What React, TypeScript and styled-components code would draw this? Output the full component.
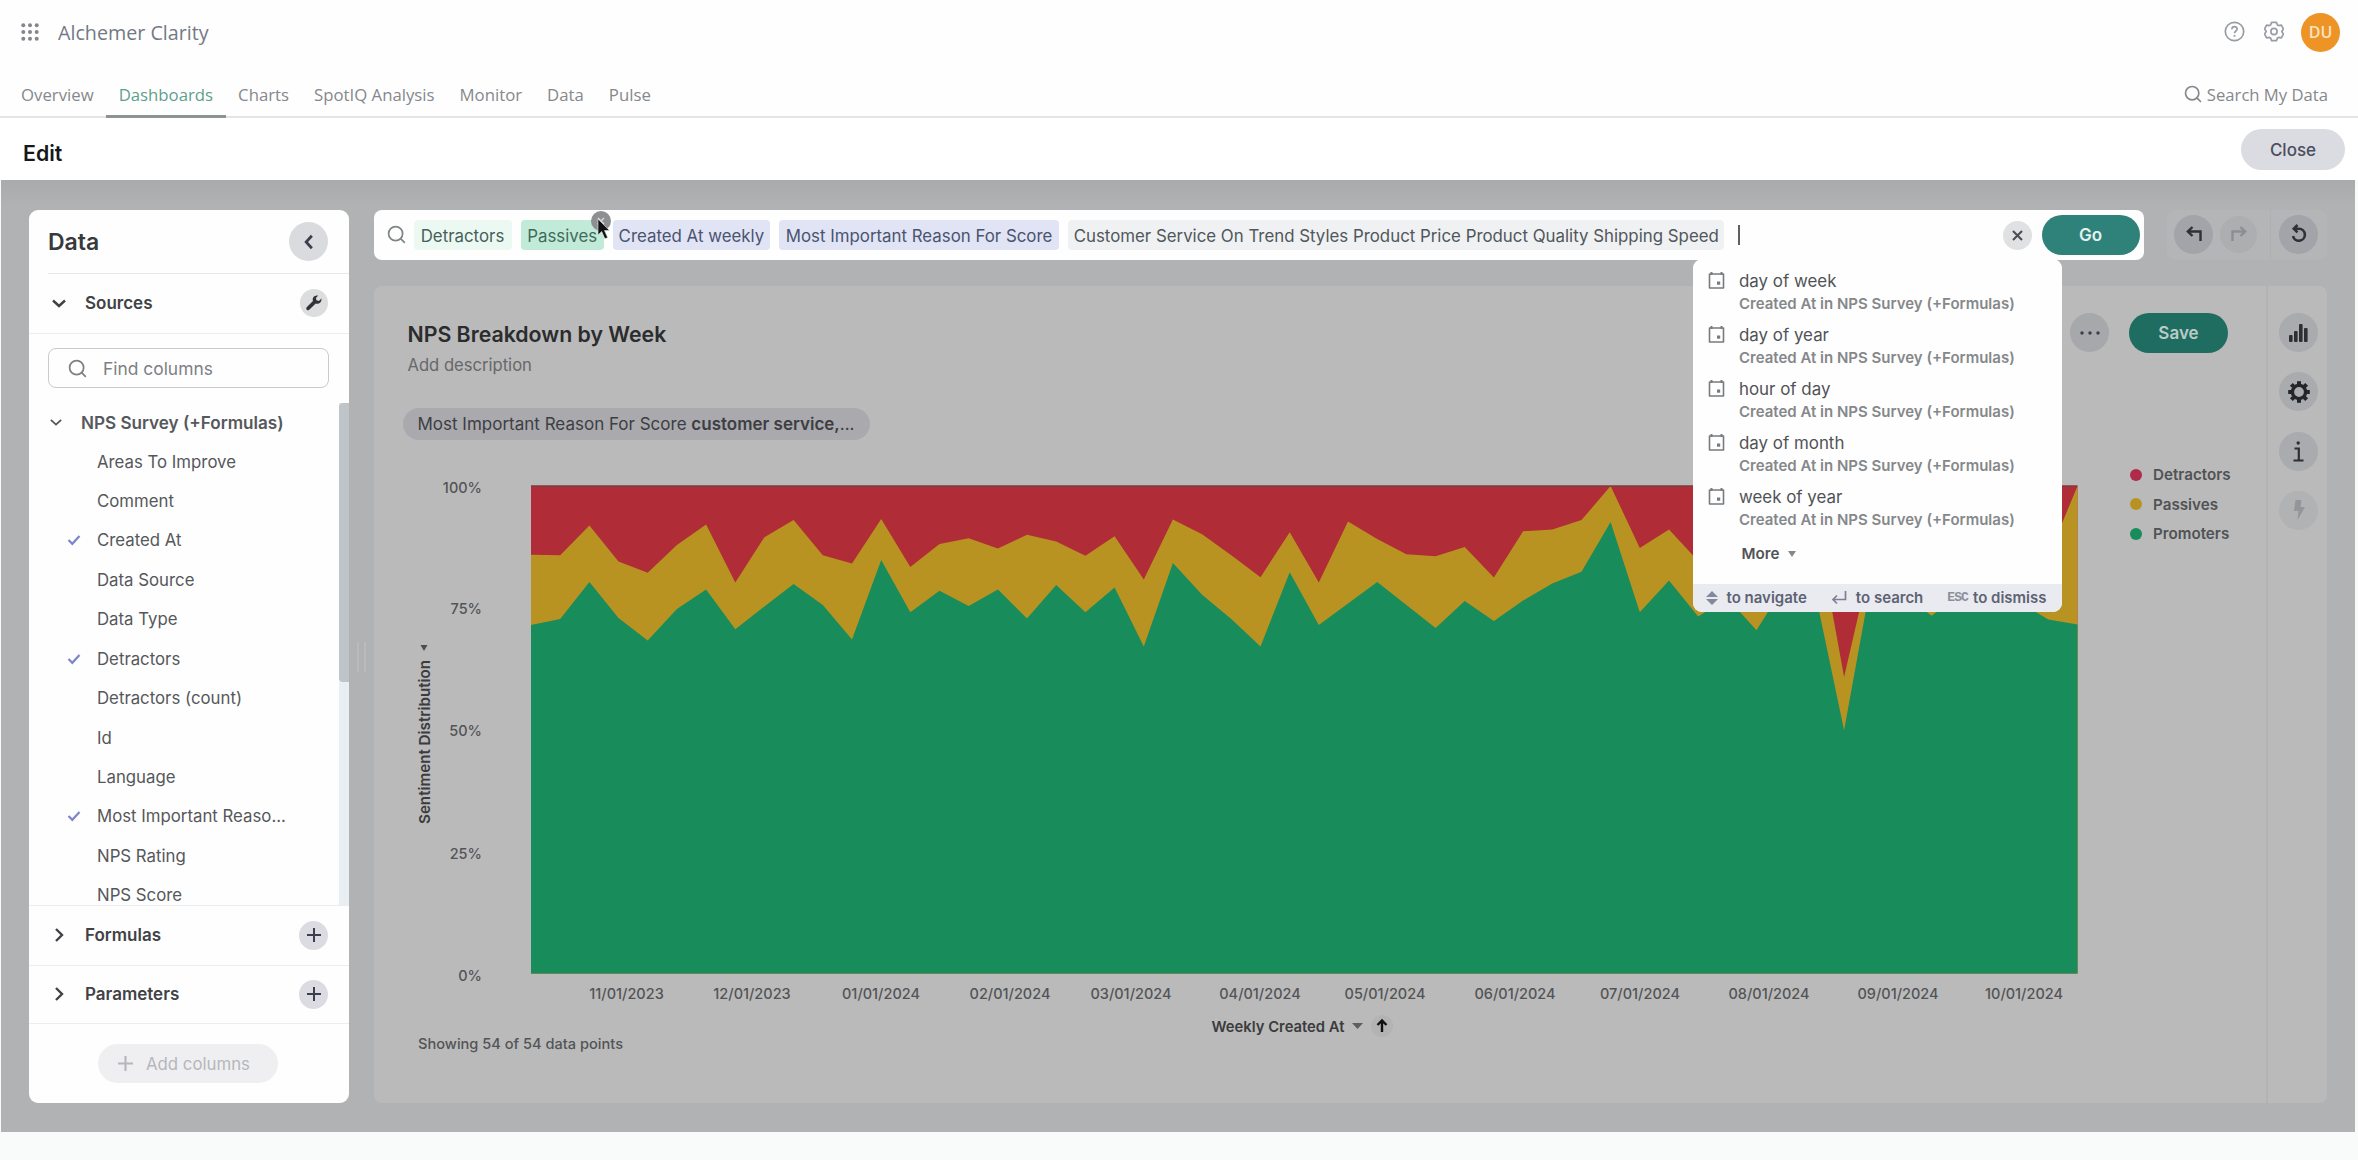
import React from "react";
import styled, { createGlobalStyle } from "styled-components";
import { Search } from "lucide-react";

const Global = createGlobalStyle`
  * { box-sizing: border-box; }
  body { margin: 0; background: #fefefe; font-family: Inter, "Liberation Sans", sans-serif; }
  button { font: inherit; border: 0; padding: 0; cursor: pointer; }
`;

const Page = styled.div`
  width: 2358px;
  height: 1160px;
  display: flex;
  flex-direction: column;
  overflow: hidden;
  background: #f9fafa;
`;

/* ---------- top chrome ---------- */
const Brand = styled.header`
  height: 64px;
  flex: none;
  display: flex;
  align-items: center;
  padding: 0 18px 0 21px;
  background: #fefefe;
`;
const BrandName = styled.span`
  margin-left: 19px;
  flex: 1;
  font: 400 19.7px "Open Sans", sans-serif;
  color: #747985;
`;
const Avatar = styled.div`
  width: 39px;
  height: 39px;
  margin-left: 17px;
  border-radius: 50%;
  background: #ee9426;
  color: #fbe3c2;
  display: flex;
  align-items: center;
  justify-content: center;
  font: 600 16px "Open Sans", sans-serif;
`;
const BrandIcon = styled.span`
  display: flex;
  margin: -2px 0 0 19px;
  color: #989ca4;
`;
const Nav = styled.nav`
  height: 54px;
  flex: none;
  display: flex;
  padding: 0 30px 0 8.5px;
  background: #fefefe;
  border-bottom: 2px solid #e3e4e4;
`;
const Tab = styled.a<{ $active?: boolean }>`
  height: 54px;
  padding: 0 12.5px;
  line-height: 61px;
  font-family: "Open Sans", sans-serif;
  font-size: 16.75px;
  color: ${(p) => (p.$active ? "#5f9e8e" : "#85888c")};
  border-bottom: 3px solid ${(p) => (p.$active ? "#8c9492" : "transparent")};
`;
const NavSearch = styled.div`
  margin-left: auto;
  display: flex;
  align-items: center;
  gap: 4px;
  padding-top: 8px;
  font: 400 16.65px "Open Sans", sans-serif;
  color: #85888c;
`;
const EditBar = styled.div`
  height: 62px;
  flex: none;
  display: flex;
  align-items: center;
  justify-content: space-between;
  padding: 2px 13px 0 23px;
  background: #fff;
`;
const EditTitle = styled.h1`
  margin: 6px 0 0;
  font-size: 21.3px;
  font-weight: 600;
  color: #17181a;
`;
const CloseButton = styled.button`
  width: 104px;
  height: 41px;
  margin-top: -1px;
  border-radius: 21px;
  background: #dbdbe2;
  color: #4b4e60;
  font-size: 17px;
  font-weight: 500;
`;

/* ---------- workspace ---------- */
const Workspace = styled.main`
  height: 952px;
  flex: none;
  margin: 0 3px 0 1px;
  display: flex;
  padding: 30px 28px 29px 28px;
  background: linear-gradient(#a8aaab, #b0b2b3 26px, #b0b2b3);
`;
const Sidebar = styled.aside`
  width: 320px;
  flex: none;
  display: flex;
  flex-direction: column;
  border-radius: 9px;
  background: #fefefe;
  overflow: hidden;
`;
const SideHead = styled.div`
  height: 64px;
  flex: none;
  display: flex;
  align-items: center;
  justify-content: space-between;
  margin-left: 19px;
  padding-right: 21px;
  border-bottom: 1px solid #e6e8ea;
  font-size: 23px;
  font-weight: 600;
  color: #37393d;
`;
const Round = styled.button<{ $size: number; $bg?: string; $fg?: string }>`
  width: ${(p) => p.$size}px;
  height: ${(p) => p.$size}px;
  flex: none;
  display: flex;
  align-items: center;
  justify-content: center;
  border-radius: 50%;
  background: ${(p) => p.$bg ?? "#d9dbdf"};
  color: ${(p) => p.$fg ?? "#3b3e4e"};
`;
const ClearButton = styled(Round)`
  margin-left: auto;
`;
const RedoButton = styled(Round)`
  margin-left: 7px;
`;
const Section = styled.div<{ $height: number }>`
  height: ${(p) => p.$height}px;
  flex: none;
  display: flex;
  align-items: center;
  padding: 0 21px 1px 23px;
  border-bottom: 1px solid #ebedf0;
  color: #3f4246;
  svg { flex: none; }
`;
const SectionName = styled.span`
  flex: 1;
  margin-left: 19px;
  font-size: 17px;
  font-weight: 600;
`;
const FindBox = styled.div`
  height: 40px;
  flex: none;
  margin: 14px 20px 15px 19px;
  padding-left: 18px;
  display: flex;
  align-items: center;
  gap: 15px;
  border: 1.5px solid #c9cbcd;
  border-radius: 8px;
  color: #7d8084;
  font-size: 17.4px;
`;
const ListArea = styled.div`
  flex: 1;
  min-height: 0;
  display: flex;
  overflow: hidden;
  border-bottom: 1px solid #ebedf0;
`;
const ColumnList = styled.div`
  flex: 1;
  min-width: 0;
`;
const ListHead = styled.div`
  height: 38.8px;
  display: flex;
  align-items: center;
  padding-left: 21px;
  gap: 19px;
  font-size: 17.1px;
  font-weight: 600;
  color: #55585c;
  white-space: nowrap;
`;
const Column = styled.div`
  height: 39.45px;
  display: flex;
  align-items: center;
  font-size: 16.8px;
  color: #55585b;
`;
const CheckSlot = styled.span`
  width: 68px;
  padding-left: 38px;
  display: flex;
  color: #7f85cc;
`;
const Track = styled.div`
  width: 10px;
  background: #e8eef1;
`;
const Thumb = styled.div`
  height: 279px;
  background: #bfc4c8;
  border-radius: 4px 0 0 4px;
`;
const AddArea = styled.div`
  height: 79px;
  flex: none;
  display: flex;
  padding: 20px 0 0 69px;
`;
const AddButton = styled.button`
  width: 180px;
  height: 39px;
  display: flex;
  align-items: center;
  justify-content: center;
  gap: 13px;
  padding-right: 8px;
  border-radius: 20px;
  background: #efeff1;
  color: #b4b7bc;
  font-size: 16.8px;
`;
const Resizer = styled.div`
  width: 24.5px;
  flex: none;
  display: flex;
  align-items: center;
  justify-content: center;
  gap: 5px;
  &::before, &::after { content: ""; width: 2px; height: 30px; background: #b8babb; }
`;
const Main = styled.section`
  flex: 1;
  min-width: 0;
  display: flex;
  flex-direction: column;
  gap: 26px;
`;
const TopRow = styled.div`
  height: 50px;
  flex: none;
  display: flex;
  justify-content: space-between;
`;

/* ---------- search bar ---------- */
const SearchBar = styled.div`
  position: relative;
  width: 1770px;
  display: flex;
  align-items: center;
  padding: 0 4px 0 12px;
  border-radius: 8px;
  background: #fefefe;
  color: #828587;
`;
const BarIcon = styled(Search)`
  margin: -2px 7px 0 0;
`;
const chipTones = {
  mint: ["#ecf9f3", "#46605a"],
  green: ["#c1ead8", "#3f6a5c"],
  blue: ["#e0e4f4", "#4a5370"],
  grey: ["#eff1f2", "#50575c"],
};
const Chip = styled.span<{ $tone: keyof typeof chipTones; $width: number }>`
  position: relative;
  height: 30px;
  width: ${(p) => p.$width}px;
  margin-right: 9.2px;
  padding-top: 1px;
  display: flex;
  align-items: center;
  justify-content: center;
  border-radius: 4px;
  white-space: nowrap;
  font-size: 16.85px;
  background: ${(p) => chipTones[p.$tone][0]};
  color: ${(p) => chipTones[p.$tone][1]};
`;
const ChipRemove = styled.span`
  position: absolute;
  right: -7px;
  top: -9px;
  width: 20px;
  height: 20px;
  display: flex;
  align-items: center;
  justify-content: center;
  border-radius: 50%;
  background: #8d9090;
`;
const Pointer = styled.svg`
  position: absolute;
  left: 76px;
  top: -2px;
  z-index: 2;
`;
const Caret = styled.span`
  width: 1.5px;
  height: 20px;
  margin-left: 5px;
  background: #5d6063;
`;
const GoButton = styled.button`
  width: 98px;
  height: 40px;
  margin-left: 10px;
  border-radius: 20px;
  background: #2f8279;
  color: #e4f1ef;
  font-size: 17px;
  font-weight: 600;
`;

const Menu = styled.div`
  position: absolute;
  left: 1319px;
  top: 49px;
  z-index: 3;
  width: 369px;
  height: 353px;
  display: flex;
  flex-direction: column;
  padding-top: 11px;
  border-radius: 9px;
  background: #fefefe;
  overflow: hidden;
`;
const Option = styled.div`
  height: 54.1px;
  flex: none;
  display: flex;
  gap: 14.5px;
  padding-left: 15px;
  color: #777b7e;
`;
const OptionIcon = styled.span`
  padding-top: 2px;
`;
const OptionName = styled.div`
  height: 22.5px;
  line-height: 23px;
  font-size: 16.9px;
  color: #505356;
`;
const OptionSource = styled.div`
  line-height: 22px;
  font-size: 15px;
  font-weight: 600;
  color: #85888a;
`;
const More = styled.div`
  display: flex;
  align-items: center;
  gap: 9px;
  padding: 4px 0 0 49px;
  font-size: 15.2px;
  font-weight: 600;
  line-height: 20px;
  color: #505356;
`;
const MenuFooter = styled.div`
  height: 28px;
  margin-top: auto;
  display: flex;
  align-items: center;
  padding: 0 15px 1px 13px;
  justify-content: space-between;
  background: #e9ebf1;
  font-size: 15px;
  font-weight: 600;
  color: #5d6273;
`;
const Hint = styled.span`
  display: flex;
  align-items: center;
  gap: 9px;
`;
const Esc = styled.span`
  margin-right: -4px;
  font: 700 13px "Liberation Mono", monospace;
  letter-spacing: -0.9px;
  color: #8b8f9b;
`;

/* ---------- history controls ---------- */
const History = styled.div`
  width: 160px;
  display: flex;
  align-items: center;
  padding: 0 9px 2px 7px;
  border-radius: 8px;
  background: #b4b5b6;
`;
const HistoryDivider = styled.span`
  width: 1px;
  height: 50px;
  margin: 0 8px 0 13px;
  background: #aeafb0;
`;

/* ---------- answer card ---------- */
const Card = styled.div`
  flex: 1;
  min-height: 0;
  display: flex;
  border-radius: 8px;
  background: #bababa;
`;
const Answer = styled.div`
  flex: 1;
  min-width: 0;
  padding: 27px 38px 0 34px;
`;
const AnswerHead = styled.div`
  height: 94px;
  display: flex;
  align-items: flex-start;
`;
const Titles = styled.div`
  flex: 1;
  padding-top: 8px;
`;
const Title = styled.h2`
  margin: 0;
  font-size: 21.3px;
  line-height: 27px;
  font-weight: 600;
  color: #2b2c2e;
`;
const Description = styled.p`
  margin: 6px 0 0;
  font-size: 16.6px;
  line-height: 22px;
  color: #66686a;
`;
const SaveButton = styled.button`
  width: 99px;
  height: 40px;
  margin-left: 20px;
  border-radius: 20px;
  background: #1f6c60;
  color: #b9cbc8;
  font-size: 17px;
  font-weight: 600;
`;
const FilterPill = styled.div`
  width: 467px;
  height: 32px;
  margin: 1px 0 0 -5px;
  display: flex;
  align-items: center;
  justify-content: center;
  border-radius: 16px;
  background: #a9a9ae;
  color: #3d3e42;
  font-size: 17px;
  white-space: pre;
  b { font-weight: 600; }
`;
const ChartRow = styled.div`
  display: flex;
  justify-content: space-between;
  align-items: flex-start;
  margin-top: 21px;
`;
const Legend = styled.ul`
  width: 98px;
  margin: -1px 0 0;
  padding: 0;
  list-style: none;
`;
const LegendItem = styled.li<{ $color: string }>`
  height: 29.6px;
  display: flex;
  align-items: center;
  gap: 11px;
  font-size: 15.2px;
  font-weight: 600;
  color: #505254;
  &::before {
    content: "";
    flex: none;
    width: 12px;
    height: 12px;
    border-radius: 50%;
    background: ${(p) => p.$color};
  }
`;
const Rail = styled.div`
  width: 61px;
  display: flex;
  flex-direction: column;
  align-items: center;
  gap: 20.3px;
  padding: 27px 0 0 2px;
  border-left: 2px solid #b2b3b4;
`;

const RED = "#b02c37";
const YELLOW = "#b89322";
const GREEN = "#188c5b";

/* Plot frame, in page pixels. */
const LEFT = 531;
const RIGHT = 2077.5;
const TOP = 486;
const BOTTOM = 973.5;

/* Weekly boundaries, in percent: top of the passives, top of the promoters. */
const passives = [
  85.9, 85.8, 91.9, 84.5, 82.2, 87.9, 92.1, 80.2, 89.5, 93.0, 85.8, 84.1, 93.2, 83.4, 88.1, 89.3, 87.2, 90.0, 88.6,
  85.7, 89.7, 80.8, 93.1, 90.1, 85.8, 81.3, 90.5, 80.2, 92.7, 89.1, 86.0, 85.6, 87.5, 81.2, 90.7, 91.1, 93.0, 100,
  87.3, 91.1, 84.6, 88, 85.6, 92, 93.8, 60.8, 86.7, 90, 86, 91, 92, 90, 85.6, 100,
];
const promoters = [
  71.5, 72.7, 80.3, 72.9, 68.3, 74.8, 78.8, 70.6, 75.3, 79.9, 75.6, 68.5, 84.8, 74.1, 78.5, 75.4, 78.8, 72.8, 79.7,
  74.1, 79.2, 67.1, 84.2, 77.7, 72.7, 67.1, 82.3, 71.5, 75.9, 80.3, 75.6, 70.9, 76.4, 72.3, 76.5, 80.0, 82.4, 92.6,
  74.1, 80.6, 73.2, 77, 70.4, 80, 78.4, 49.9, 82.7, 78, 73.4, 78, 79, 76.2, 72.6, 71.6,
];
const area = (values: number[]) => {
  const step = (RIGHT - LEFT) / (values.length - 1);
  const line = values.map((v, i) => `${(LEFT + i * step).toFixed(1)},${(BOTTOM - ((BOTTOM - TOP) * v) / 100).toFixed(1)}`);
  return `${LEFT},${BOTTOM} ${line.join(" ")} ${RIGHT},${BOTTOM}`;
};
const xTicks: [number, string][] = [
  [626.5, "11/01/2023"], [752, "12/01/2023"], [881, "01/01/2024"], [1010, "02/01/2024"],
  [1131, "03/01/2024"], [1260, "04/01/2024"], [1385, "05/01/2024"], [1515, "06/01/2024"],
  [1640, "07/01/2024"], [1769, "08/01/2024"], [1898, "09/01/2024"], [2024, "10/01/2024"],
];
const yTicks: [number, string][] = [[487.5, "100%"], [609, "75%"], [731, "50%"], [854, "25%"], [976, "0%"]];

const ChartText = styled.text<{ $strong?: boolean; $size?: number }>`
  font-family: Inter, "Liberation Sans", sans-serif;
  font-size: ${(p) => p.$size ?? 14.5}px;
  font-weight: ${(p) => (p.$strong ? 600 : 500)};
  fill: ${(p) => (p.$strong ? "#3a3c3e" : "#525456")};
`;

const AreaChart = () => (
  <svg width="1675" height="600" viewBox="408 461 1675 600">
    <rect x={LEFT} y={TOP} width={RIGHT - LEFT} height={BOTTOM - TOP} fill={RED} />
    <polygon points={area(passives)} fill={YELLOW} />
    <polygon points={area(promoters)} fill={GREEN} />
    <path d={`M${LEFT} ${TOP}H${RIGHT}`} stroke="#7d3b40" strokeWidth="1.5" />
    {yTicks.map(([y, label]) => (
      <ChartText key={label} x="482" y={y + 5.2} textAnchor="end">{label}</ChartText>
    ))}
    {xTicks.map(([x, label]) => (
      <ChartText key={label} x={x} y="998.7" textAnchor="middle">{label}</ChartText>
    ))}
    <ChartText $strong $size={15.2} transform="translate(429.5 824) rotate(-90)">Sentiment Distribution</ChartText>
    <path d="M420.5 645h7l-3.5 6z" fill="#4c4e50" />
    <ChartText $strong $size={14.8} x="1211.5" y="1031.5">Weekly Created At</ChartText>
    <path d="M1352 1023h11l-5.5 6z" fill="#5c5e60" />
    <circle cx="1382" cy="1026" r="11" fill="#b3b3b4" />
    <path d="M1382 1032v-11M1377.5 1025l4.5-4.6 4.5 4.6" stroke="#111" strokeWidth="2.4" fill="none" />
    <ChartText $size={14.6} x="418" y="1049.3">Showing 54 of 54 data points</ChartText>
  </svg>
);

const Chevron = ({ dir, size = 14, width = 2.4 }: { dir: "down" | "right" | "left"; size?: number; width?: number }) => {
  const d = { down: "M1 4.5l6 5.5 6-5.5", right: "M4 1l6 6-6 6", left: "M9.5 1.5L4.5 7l5 5.5" }[dir];
  return (
    <svg width={size} height={size} viewBox="0 0 14 14" fill="none" stroke="currentColor" strokeWidth={width}>
      <path d={d} />
    </svg>
  );
};
const Plus = ({ size = 14, width = 2 }: { size?: number; width?: number }) => (
  <svg width={size} height={size} viewBox="0 0 14 14" stroke="currentColor" strokeWidth={width}>
    <path d="M7 0v14M0 7h14" />
  </svg>
);
const CheckMark = () => (
  <svg width="14" height="12" viewBox="0 0 14 12" fill="none" stroke="currentColor" strokeWidth="2.2">
    <path d="M1.5 6l3.8 3.8L12.5 2" />
  </svg>
);
const Wrench = () => (
  <svg width="16" height="16" viewBox="0 0 16 16" fill="currentColor">
    <path d="M15.4 3.6l-2.5 2.3-2.4-.7-.6-2.3L12.2.5C10 0 7.3 1 6.8 3.6c-.2.9-.1 1.6.2 2.3L.9 12c-.9 1-.8 2.1-.1 2.7.7.7 1.9.7 2.7-.1L9.7 8.5c2.9 1.2 6.4-.9 5.7-4.9z" />
  </svg>
);
const Calendar = () => (
  <svg width="17" height="17" viewBox="0 0 17 17" fill="none" stroke="currentColor" strokeWidth="1.6">
    <path d="M1.5 2h14v14h-14z" strokeLinejoin="round" />
    <path d="M3.5 0v3M13.5 0v3" strokeWidth="2" />
    <rect x="9" y="9.5" width="3.2" height="3.2" fill="currentColor" stroke="none" />
  </svg>
);
const TurnArrow = ({ flip }: { flip?: boolean }) => (
  <svg width="18" height="18" viewBox="0 0 18 18" fill="none" stroke="currentColor" strokeWidth="2.4">
    <path transform={flip ? "matrix(-1 0 0 1 18 0)" : undefined} d="M7.5 2L2.8 6.5l4.7 4.5M3.2 6.5H15.5V16" />
  </svg>
);
const ResetArrow = () => (
  <svg width="19" height="20" viewBox="0 0 19 20" fill="none" stroke="currentColor" strokeWidth="2.6">
    <path d="M8.5 1L4.8 4.7 8.5 8.4M5.3 4.7h4.7a6 6 0 1 1-6 7.3" />
  </svg>
);
const Bars = () => (
  <svg width="19" height="18" viewBox="0 0 19 18" fill="currentColor">
    <rect x="0" y="11" width="3.6" height="7" rx="1" /><rect x="5" y="7" width="3.6" height="11" rx="1" />
    <rect x="10" y="0" width="3.6" height="18" rx="1" /><rect x="15" y="4" width="3.6" height="14" rx="1" />
  </svg>
);
const Cog = () => (
  <svg width="22" height="22" viewBox="-11 -11 22 22" fill="none" stroke="currentColor">
    <circle r="6.6" strokeWidth="3.4" />
    {[0, 45, 90, 135, 180, 225, 270, 315].map((a) => (
      <path key={a} d="M0-7.5V-10.8" strokeWidth="4" transform={`rotate(${a})`} />
    ))}
  </svg>
);
const InfoMark = () => (
  <svg width="11" height="21" viewBox="0 0 11 21" fill="none" stroke="currentColor" strokeWidth="2.2">
    <path d="M1.5 7.5h4.3V19.5M.5 19.5h10" />
    <circle cx="5.2" cy="2" r="1.7" fill="currentColor" stroke="none" />
  </svg>
);
const Bolt = () => (
  <svg width="12" height="20" viewBox="0 0 12 20" fill="currentColor">
    <path d="M2.5 0h6L7.5 7H12L4.5 20l1-9H1z" />
  </svg>
);
const HelpIcon = () => (
  <svg width="21" height="21" viewBox="0 0 21 21" fill="none" stroke="currentColor" strokeWidth="1.7">
    <circle cx="10.5" cy="10.5" r="9.2" />
    <path d="M7.9 8.2c0-3.3 5.2-3.3 5.2-.2 0 2-2.6 2-2.6 4.2M10.5 14v1.8" />
  </svg>
);
const HexGear = () => (
  <svg width="20" height="21" viewBox="0 0 20 21" fill="none" stroke="currentColor" strokeWidth="1.7" strokeLinejoin="round">
    <path d="M7.6 1.3h4.8l1 2.6 1.3.7 2.7-.4 2 3.7-1.6 2.6 1.6 2.6-2 3.7-2.7-.4-1.3.7-1 2.6H7.6l-1-2.6-1.3-.7-2.7.4-2-3.7 1.600-2.600L.6 7.900l2-3.700 2.700.4 1.300-.7z" />
    <circle cx="10" cy="10.5" r="3.1" />
  </svg>
);
const Dots = () => (
  <svg width="20" height="4" viewBox="0 0 20 4" fill="currentColor">
    {[2, 10, 18].map((x) => <circle key={x} cx={x} cy="2" r="1.7" />)}
  </svg>
);
const AppGrid = () => (
  <svg width="18" height="18" viewBox="0 0 18 18" fill="#85868d">
    {[2.3, 9, 15.7].flatMap((x) => [2.3, 9, 15.7].map((y) => <circle key={`${x}-${y}`} cx={x} cy={y} r="2" />))}
  </svg>
);

const tabs = ["Overview", "Dashboards", "Charts", "SpotIQ Analysis", "Monitor", "Data", "Pulse"];
const columns = [
  "Areas To Improve", "Comment", "Created At", "Data Source", "Data Type", "Detractors",
  "Detractors (count)", "Id", "Language", "Most Important Reaso...", "NPS Rating", "NPS Score",
];
const selected = new Set(["Created At", "Detractors", "Most Important Reaso..."]);
const options = ["day of week", "day of year", "hour of day", "day of month", "week of year"];

export default function App() {
  return (
    <Page>
      <Global />
      <Brand>
        <AppGrid />
        <BrandName>Alchemer Clarity</BrandName>
        <BrandIcon><HelpIcon /></BrandIcon>
        <BrandIcon><HexGear /></BrandIcon>
        <Avatar>DU</Avatar>
      </Brand>
      <Nav>
        {tabs.map((t) => <Tab key={t} $active={t === "Dashboards"}>{t}</Tab>)}
        <NavSearch><Search size={20} />Search My Data</NavSearch>
      </Nav>
      <EditBar>
        <EditTitle>Edit</EditTitle>
        <CloseButton>Close</CloseButton>
      </EditBar>

      <Workspace>
        <Sidebar>
          <SideHead>
            Data
            <Round $size={39}><Chevron dir="left" size={16} /></Round>
          </SideHead>
          <Section $height={60}>
            <Chevron dir="down" />
            <SectionName>Sources</SectionName>
            <Round $size={28} $bg="#dcdddf" $fg="#303236"><Wrench /></Round>
          </Section>
          <FindBox><Search size={21} />Find columns</FindBox>
          <ListArea>
            <ColumnList>
              <ListHead><Chevron dir="down" size={12} width={2.2} />NPS Survey (+Formulas)</ListHead>
              {columns.map((c) => (
                <Column key={c}>
                  <CheckSlot>{selected.has(c) && <CheckMark />}</CheckSlot>
                  {c}
                </Column>
              ))}
            </ColumnList>
            <Track><Thumb /></Track>
          </ListArea>
          <Section $height={60}>
            <Chevron dir="right" />
            <SectionName>Formulas</SectionName>
            <Round $size={29} $bg="#dcdbe1"><Plus /></Round>
          </Section>
          <Section $height={58}>
            <Chevron dir="right" />
            <SectionName>Parameters</SectionName>
            <Round $size={29} $bg="#dcdbe1"><Plus /></Round>
          </Section>
          <AddArea>
            <AddButton><Plus size={15} />Add columns</AddButton>
          </AddArea>
        </Sidebar>
        <Resizer />

        <Main>
          <TopRow>
            <SearchBar>
              <BarIcon size={21} />
              <Chip $tone="mint" $width={98}>Detractors</Chip>
              <Chip $tone="green" $width={83}>
                Passives
                <ChipRemove>
                  <svg width="8" height="8" viewBox="0 0 8 8" stroke="#d4d6d6" strokeWidth="1.6"><path d="M1 1l6 6M7 1L1 7" /></svg>
                </ChipRemove>
                <Pointer width="14" height="22" viewBox="0 0 14 22">
                  <path d="M1 1v16l3.7-3.5 3.2 7.3 2.8-1.2-3.2-7H12.5z" fill="#111" stroke="#e8eeee" strokeWidth=".6" />
                </Pointer>
              </Chip>
              <Chip $tone="blue" $width={157}>Created At weekly</Chip>
              <Chip $tone="blue" $width={280}>Most Important Reason For Score</Chip>
              <Chip $tone="grey" $width={656}>Customer Service On Trend Styles Product Price Product Quality Shipping Speed</Chip>
              <Caret />
              <ClearButton $size={29} $bg="#e0e1e3" $fg="#4b4d52">
                <svg width="11" height="11" viewBox="0 0 11 11" stroke="currentColor" strokeWidth="2.1"><path d="M1 1l9 9M10 1L1 10" /></svg>
              </ClearButton>
              <GoButton>Go</GoButton>
              <Menu>
                {options.map((o) => (
                  <Option key={o}>
                    <OptionIcon><Calendar /></OptionIcon>
                    <div>
                      <OptionName>{o}</OptionName>
                      <OptionSource>Created At in NPS Survey (+Formulas)</OptionSource>
                    </div>
                  </Option>
                ))}
                <More>
                  More
                  <svg width="8" height="6" viewBox="0 0 8 6" fill="#85888a"><path d="M0 0h8L4 6z" /></svg>
                </More>
                <MenuFooter>
                  <Hint>
                    <svg width="12" height="14" viewBox="0 0 12 14" fill="#83889a"><path d="M0 6L6 0l6 6zM0 8h12l-6 6z" /></svg>
                    to navigate
                  </Hint>
                  <Hint>
                    <svg width="16" height="14" viewBox="0 0 16 14" fill="none" stroke="#7b8092" strokeWidth="1.7"><path d="M14.5 0v8.5H2M6 4.5L2 8.5l4 4" /></svg>
                    to search
                  </Hint>
                  <Hint><Esc>ESC</Esc>to dismiss</Hint>
                </MenuFooter>
              </Menu>
            </SearchBar>
            <History>
              <Round $size={39} $bg="#a3a4a9" $fg="#2f3134"><TurnArrow /></Round>
              <RedoButton $size={37} $bg="#adaeb0" $fg="#8c8e91"><TurnArrow flip /></RedoButton>
              <HistoryDivider />
              <Round $size={39} $bg="#a3a4a9" $fg="#2f3134"><ResetArrow /></Round>
            </History>
          </TopRow>
          <Card>
            <Answer>
              <AnswerHead>
                <Titles>
                  <Title>NPS Breakdown by Week</Title>
                  <Description>Add description</Description>
                </Titles>
                <Round $size={39} $bg="#a6a8ac"><Dots /></Round>
                <SaveButton>Save</SaveButton>
              </AnswerHead>
              <FilterPill>Most Important Reason For Score <b>customer service,</b>...</FilterPill>
              <ChartRow>
                <AreaChart />
                <Legend>
                  <LegendItem $color="#b02a4a">Detractors</LegendItem>
                  <LegendItem $color={YELLOW}>Passives</LegendItem>
                  <LegendItem $color={GREEN}>Promoters</LegendItem>
                </Legend>
              </ChartRow>
            </Answer>
            <Rail>
              <Round $size={39} $bg="#a9abae" $fg="#2d2f33"><Bars /></Round>
              <Round $size={39} $bg="#a9abae" $fg="#232529"><Cog /></Round>
              <Round $size={39} $bg="#a9abae" $fg="#2d2f33"><InfoMark /></Round>
              <Round $size={39} $bg="#b1b2b4" $fg="#93959b"><Bolt /></Round>
            </Rail>
          </Card>
        </Main>
      </Workspace>
    </Page>
  );
}
